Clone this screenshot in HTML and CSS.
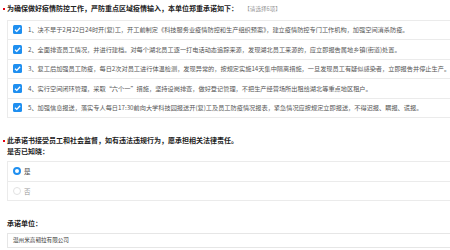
FILE: index.html
```html
<!DOCTYPE html>
<html lang="zh-CN">
  <head>
    <meta charset="UTF-8" />
    <meta name="viewport" content="width=device-width, initial-scale=1.0" />
    <title>复工承诺书</title>
    <link rel="stylesheet" href="styles.css">
  </head>
  <body>
    <div class="page">
      <div class="question">
        <div class="q-title">
          <span class="req"></span>为确保做好疫情防控工作，严防重点区域疫情输入，本单位郑重承诺如下：<span class="hint">【请选择6项】</span>
        </div>
        <div class="options">
          <div class="option">
            <span class="check"><svg viewBox="0 0 10 10"><path d="M2.2 5.2 L4.2 7.1 L7.9 3" /></svg></span>
            <span>1、决不早于2月22日24时开(复)工，开工前制定《科技服务业疫情防控和生产组织预案》，建立疫情防控专门工作机构，加强空间消杀防疫。</span>
          </div>
          <div class="option">
            <span class="check"><svg viewBox="0 0 10 10"><path d="M2.2 5.2 L4.2 7.1 L7.9 3" /></svg></span>
            <span>2、全面排查员工情况，并进行建档。对每个湖北员工逐一打电话动态追踪来源，发现湖北员工来源的，应立即报告属地乡镇(街道)处置。</span>
          </div>
          <div class="option">
            <span class="check"><svg viewBox="0 0 10 10"><path d="M2.2 5.2 L4.2 7.1 L7.9 3" /></svg></span>
            <span>3、复工后加强员工防疫，每日2次对员工进行体温检测，发现异常的，按规定实施14天集中隔离措施，一旦发现员工有疑似感染者，立即报告并停止生产。</span>
          </div>
          <div class="option">
            <span class="check"><svg viewBox="0 0 10 10"><path d="M2.2 5.2 L4.2 7.1 L7.9 3" /></svg></span>
            <span>4、实行空间闭环管理，采取“六个一”措施，坚持设岗排查，做好登记管理，不把生产经营场所出租给湖北等重点地区租户。</span>
          </div>
          <div class="option">
            <span class="check"><svg viewBox="0 0 10 10"><path d="M2.2 5.2 L4.2 7.1 L7.9 3" /></svg></span>
            <span>5、加强信息报送，落实专人每日17:30前向大学科技园报送开(复)工及员工防疫情况报表，紧急情况应按规定立即报送，不得迟报、瞒报、谎报。</span>
          </div>
        </div>
      </div>

      <div class="question second">
        <div class="q-title">
          <span class="req"></span>此承诺书接受员工和社会监督，如有违法违规行为，愿承担相关法律责任。<br />是否已知晓：
        </div>
        <div class="radios">
          <div class="radio-row">
            <span class="radio on"></span>
            <span>是</span>
          </div>
          <div class="radio-row">
            <span class="radio"></span>
            <span class="muted">否</span>
          </div>
        </div>
      </div>

      <div class="question second">
        <div class="q-title">承诺单位：</div>
        <div class="text-input">温州米高韧拉有限公司</div>
      </div>
    </div>
  </body>
</html>
```

FILE: styles.css
```css
body {
  margin: 0;
  background: #fff;
  font-family: "Noto Sans CJK SC", "Noto Sans", sans-serif;
  overflow: hidden;
}

.page {
  width: 443px;
  padding-left: 7px;
}

.q-title {
  font-size: 7px;
  line-height: 11px;
  font-weight: bold;
  color: #222;
  padding-top: 2.5px;
}

.req {
  display: inline-block;
  width: 2px;
  height: 2px;
  margin-left: -4px;
  margin-right: 2px;
  vertical-align: middle;
  background: #e60012;
}

.hint {
  margin-left: 9px;
  font-size: 5.6px;
  font-weight: normal;
  color: #999;
}

.options {
  margin-top: 5px;
  border: 1px solid #ebebeb;
  border-right: none;
}

.option {
  display: flex;
  align-items: center;
  height: 18.5px;
  padding-left: 5px;
  font-size: 6.2px;
  color: #555;
  white-space: nowrap;
  border-top: 1px solid #ebebeb;
}

.option:first-child {
  border-top: none;
}

.check {
  width: 9px;
  height: 9px;
  margin-right: 6px;
  border-radius: 1.5px;
  background: #1f8ff0;
  flex-shrink: 0;
}

.check svg {
  display: block;
  width: 9px;
  height: 9px;
  fill: none;
  stroke: #fff;
  stroke-width: 1.5;
}

.second {
  margin-top: 14px;
}

.radios {
  margin-top: 4.5px;
  border: 1px solid #ebebeb;
  border-right: none;
}

.radio-row {
  display: flex;
  align-items: center;
  height: 18.5px;
  padding-left: 5px;
  font-size: 6.5px;
  color: #444;
  border-top: 1px solid #ebebeb;
}

.radio-row:first-child {
  border-top: none;
}

.radio {
  width: 8px;
  height: 8px;
  margin-right: 3px;
  border-radius: 50%;
  border: 1px solid #e2e2e2;
  box-sizing: border-box;
}

.radio.on {
  border: 2.5px solid #1f8ff0;
}

.muted {
  color: #999;
}

.text-input {
  margin-top: 4.5px;
  height: 13px;
  line-height: 13px;
  padding-left: 5px;
  border: 1px solid #e6e6e6;
  border-right: none;
  font-size: 5.6px;
  color: #333;
}
```
